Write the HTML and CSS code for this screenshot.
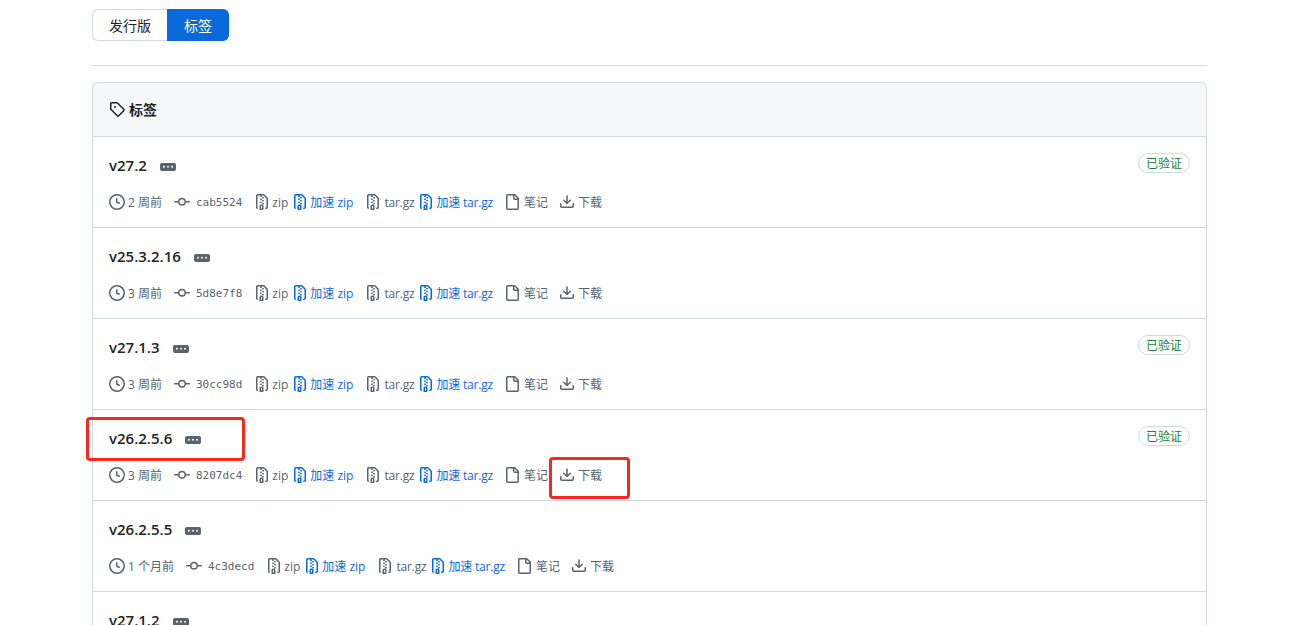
FILE: index.html
```html
<!DOCTYPE html>
<html lang="en">
<head>
  <meta charset="UTF-8">
  <meta name="viewport" content="width=device-width, initial-scale=1.0">
  <title>标签</title>
  <link rel="stylesheet" href="styles.css">
</head>
<body>
  <!-- Octicons used in every row -->
  <svg class="sprites" width="0" height="0">
    <symbol id="i-tag" viewBox="0 0 16 16"><path d="M1 7.775V2.75C1 1.784 1.784 1 2.75 1h5.025c.464 0 .91.184 1.238.513l6.25 6.25a1.75 1.75 0 0 1 0 2.474l-5.026 5.026a1.75 1.75 0 0 1-2.474 0l-6.25-6.25A1.752 1.752 0 0 1 1 7.775Zm1.5 0c0 .066.026.13.073.177l6.25 6.25a.25.25 0 0 0 .354 0l5.025-5.025a.25.25 0 0 0 0-.354l-6.25-6.25a.25.25 0 0 0-.177-.073H2.75a.25.25 0 0 0-.25.25ZM6 5a1 1 0 1 1 0 2 1 1 0 0 1 0-2Z"/></symbol>
    <symbol id="i-clock" viewBox="0 0 16 16"><path d="M8 0a8 8 0 1 1 0 16A8 8 0 0 1 8 0ZM1.5 8a6.5 6.5 0 1 0 13 0 6.5 6.5 0 0 0-13 0Zm7-3.25v2.992l2.028.812a.75.75 0 0 1-.557 1.392l-2.5-1A.751.751 0 0 1 7 8.25v-3.5a.75.75 0 0 1 1.5 0Z"/></symbol>
    <symbol id="i-commit" viewBox="0 0 16 16"><path d="M11.93 8.5a4.002 4.002 0 0 1-7.86 0H.75a.75.75 0 0 1 0-1.5h3.32a4.002 4.002 0 0 1 7.86 0h3.32a.75.75 0 0 1 0 1.5Zm-1.43-.75a2.5 2.5 0 1 0-5 0 2.5 2.5 0 0 0 5 0Z"/></symbol>
    <symbol id="i-zip" viewBox="0 0 16 16"><path d="M3.5 1.75v11.5c0 .09.048.173.126.217a.75.75 0 0 1-.752 1.298A1.748 1.748 0 0 1 2 13.25V1.75C2 .784 2.784 0 3.75 0h5.586c.464 0 .909.185 1.237.513l2.914 2.914c.329.328.513.773.513 1.237v8.586A1.75 1.75 0 0 1 12.25 15h-.5a.75.75 0 0 1 0-1.5h.5a.25.25 0 0 0 .25-.25V4.664a.25.25 0 0 0-.073-.177L9.513 1.573a.25.25 0 0 0-.177-.073H7.25a.75.75 0 0 1 0 1.5h-.5a.75.75 0 0 1 0-1.5h-3a.25.25 0 0 0-.25.25Zm3.75 8.75h.5c.966 0 1.75.784 1.75 1.75v3a.75.75 0 0 1-.75.75h-2.5a.75.75 0 0 1-.75-.75v-3c0-.966.784-1.75 1.75-1.75ZM6 5.25a.75.75 0 0 1 .75-.75h.5a.75.75 0 0 1 0 1.5h-.5A.75.75 0 0 1 6 5.25Zm.75 2.25h.5a.75.75 0 0 1 0 1.5h-.5a.75.75 0 0 1 0-1.5ZM8 6.75A.75.75 0 0 1 8.75 6h.5a.75.75 0 0 1 0 1.5h-.5A.75.75 0 0 1 8 6.75ZM8.75 3h.5a.75.75 0 0 1 0 1.5h-.5a.75.75 0 0 1 0-1.5ZM8 9.75A.75.75 0 0 1 8.75 9h.5a.75.75 0 0 1 0 1.5h-.5A.75.75 0 0 1 8 9.75Zm-1 2.5v2.25h1v-2.25a.25.25 0 0 0-.25-.25h-.5a.25.25 0 0 0-.25.25Z"/></symbol>
    <symbol id="i-file" viewBox="0 0 16 16"><path d="M2 1.75C2 .784 2.784 0 3.75 0h6.586c.464 0 .909.184 1.237.513l2.914 2.914c.329.328.513.773.513 1.237v9.586A1.75 1.75 0 0 1 13.25 16h-9.5A1.75 1.75 0 0 1 2 14.25Zm1.75-.25a.25.25 0 0 0-.25.25v12.5c0 .138.112.25.25.25h9.5a.25.25 0 0 0 .25-.25V6h-2.75A1.75 1.75 0 0 1 9 4.25V1.5Zm6.75.062V4.25c0 .138.112.25.25.25h2.688l-.011-.013-2.914-2.914-.013-.011Z"/></symbol>
    <symbol id="i-download" viewBox="0 0 16 16"><path d="M2.75 14A1.75 1.75 0 0 1 1 12.25v-2.5a.75.75 0 0 1 1.5 0v2.5c0 .138.112.25.25.25h10.5a.25.25 0 0 0 .25-.25v-2.5a.75.75 0 0 1 1.5 0v2.5A1.75 1.75 0 0 1 13.25 14Z"/><path d="M7.25 7.689V2a.75.75 0 0 1 1.5 0v5.689l1.97-1.969a.749.749 0 1 1 1.06 1.06l-3.25 3.25a.749.749 0 0 1-1.06 0L4.22 6.78a.749.749 0 1 1 1.06-1.06l1.97 1.969Z"/></symbol>
    <symbol id="i-kebab" viewBox="0 0 16 16"><path d="M8 9a1.5 1.5 0 1 0 0-3 1.5 1.5 0 0 0 0 3ZM1.5 9a1.5 1.5 0 1 0 0-3 1.5 1.5 0 0 0 0 3Zm13 0a1.5 1.5 0 1 0 0-3 1.5 1.5 0 0 0 0 3Z"/></symbol>
  </svg>

  <main class="page">
    <nav class="segmented">
      <a class="seg seg-release">发行版</a>
      <a class="seg seg-tags">标签</a>
    </nav>
    <hr class="divider">

    <section class="box">
      <header class="box-header">
        <svg class="icon icon-dark"><use href="#i-tag"/></svg>
        <h2>标签</h2>
      </header>
      <div id="rows"></div>
    </section>
  </main>

  <!-- Red annotation boxes drawn over the screenshot -->
  <div class="mark mark-tag"></div>
  <div class="mark mark-download"></div>

  <script src="rows.js"></script>
</body>
</html>
```

FILE: rows.js
```js
// the last row only shows its title inside the window
const tags = [
  { name: "v27.2", age: "2 周前", sha: "cab5524", verified: true },
  { name: "v25.3.2.16", age: "3 周前", sha: "5d8e7f8", verified: false },
  { name: "v27.1.3", age: "3 周前", sha: "30cc98d", verified: true },
  { name: "v26.2.5.6", age: "3 周前", sha: "8207dc4", verified: true },
  { name: "v26.2.5.5", age: "1 个月前", sha: "4c3decd", verified: false },
  { name: "v27.1.2", verified: false }
];

function icon(name, extra) {
  return `<svg class="icon ${extra || ''}"><use href="#i-${name}"/></svg>`;
}

function meta(t) {
  if (!t.sha) return '';
  return `
    <div class="meta">
      <span class="item age">${icon('clock')}<span>${t.age}</span></span>
      <span class="item commit">${icon('commit')}<code>${t.sha}</code></span>
      <span class="item zip">${icon('zip')}<span>zip</span></span>
      <a class="item fast">${icon('zip', 'icon-blue')}<span>加速 zip</span></a>
      <span class="item targz">${icon('zip')}<span class="narrow">tar.gz</span></span>
      <a class="item fast">${icon('zip', 'icon-blue')}<span class="narrow">加速 tar.gz</span></a>
      <span class="item notes">${icon('file')}<span>笔记</span></span>
      <span class="item download">${icon('download')}<span>下载</span></span>
    </div>`;
}

document.getElementById('rows').innerHTML = tags.map(t => `
  <article class="row">
    <div class="row-top">
      <h3>${t.name}</h3>
      <span class="more"><svg class="more-dots"><use href="#i-kebab"/></svg></span>
      ${t.verified ? '<span class="verified">已验证</span>' : ''}
    </div>
    ${meta(t)}
  </article>
`).join('');
```

FILE: styles.css
```css
html, body {
  height: 625px;
  overflow: hidden;
}
body {
  margin: 0;
  background: #ffffff;
  color: #59636e;
  font-family: "Open Sans", "Noto Sans CJK SC", sans-serif;
  font-size: 12px;
  position: relative;
}
.sprites {
  position: absolute;
}
.page {
  width: 1115px;
  margin-left: 92px;
  padding-top: 9px;
}
.segmented {
  display: flex;
  height: 32px;
}
.seg {
  display: flex;
  align-items: center;
  justify-content: center;
  box-sizing: border-box;
  font-size: 14px;
}
.seg-release {
  width: 75px;
  color: #1f2328;
  border: 1px solid #d1d9e0;
  border-right: none;
  border-radius: 6px 0 0 6px;
}
.seg-tags {
  width: 62px;
  color: #ffffff;
  background: #0969da;
  border-radius: 0 6px 6px 0;
}
.divider {
  height: 1px;
  margin: 24px 0 16px;
  border: none;
  background: #d1d9e0;
}
.box {
  border: 1px solid #d1d9e0;
  border-bottom: none;
  border-radius: 6px 6px 0 0;
}
.box-header {
  display: flex;
  align-items: center;
  gap: 4px;
  box-sizing: content-box;
  height: 52px;
  padding: 0 16px 1px;
  background: #f6f8fa;
  border-radius: 6px 6px 0 0;
  border-bottom: 1px solid #d1d9e0;
}
.box-header h2 {
  margin: 0;
  font-size: 14px;
  font-weight: 600;
  color: #1f2328;
}
.icon {
  width: 16px;
  height: 16px;
  flex: none;
  fill: #59636e;
}
.icon-dark {
  fill: #1f2328;
}
.icon-blue {
  fill: #0969da;
}
.row {
  box-sizing: border-box;
  height: 91px;
  padding: 16px;
  border-bottom: 1px solid #d1d9e0;
}
.row-top {
  display: flex;
  align-items: center;
  height: 24px;
}
.row-top h3 {
  margin: 0;
  font-size: 15px;
  font-weight: 600;
  color: #1f2328;
}
.more {
  display: flex;
  align-items: center;
  justify-content: center;
  width: 16px;
  height: 8px;
  margin: 4px 0 0 13px;
  background: #59636e;
  border-radius: 2px;
}
.more-dots {
  width: 10px;
  height: 10px;
  fill: #ffffff;
}
.verified {
  display: flex;
  align-items: center;
  box-sizing: border-box;
  height: 20px;
  margin: -5px 0 0 auto;
  padding: 0 7px;
  color: #1a7f37;
  border: 1px solid #d1d9e0;
  border-radius: 10px;
}
.meta {
  display: flex;
  align-items: center;
  height: 20px;
  margin-top: 15px;
}
.item {
  display: flex;
  align-items: center;
  gap: 3px;
  white-space: nowrap;
}
.narrow {
  letter-spacing: -0.2px;
}
.fast {
  color: #0969da;
  margin-left: 4px;
  gap: 2px;
}
.commit {
  margin-left: 12px;
  gap: 6px;
}
.commit code {
  font-family: "DejaVu Sans Mono", monospace;
  font-size: 11px;
}
.zip {
  margin-left: 12px;
  gap: 2px;
}
.targz {
  margin-left: 12px;
  gap: 3px;
}
.notes {
  margin-left: 11px;
  gap: 4px;
}
.download {
  margin-left: 11px;
}
.mark {
  position: absolute;
  box-sizing: border-box;
  border: 3px solid #f5281e;
  border-radius: 4px;
}
.mark-tag {
  left: 86px;
  top: 417px;
  width: 159px;
  height: 44px;
}
.mark-download {
  left: 549px;
  top: 457px;
  width: 81px;
  height: 42px;
}
```
